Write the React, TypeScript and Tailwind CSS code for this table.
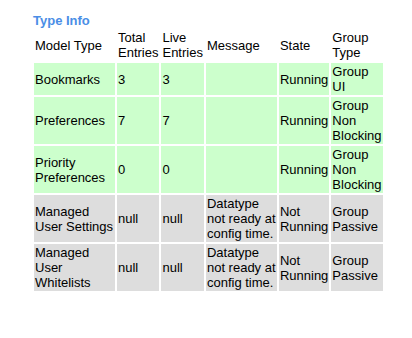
type TypeRow = {
  model: string;
  total: string;
  live: string;
  message: string;
  state: string;
  group: string;
  ok: boolean;
};

const rows: TypeRow[] = [
  { model: "Bookmarks", total: "3", live: "3", message: "", state: "Running", group: "Group UI", ok: true },
  { model: "Preferences", total: "7", live: "7", message: "", state: "Running", group: "Group Non Blocking", ok: true },
  { model: "Priority Preferences", total: "0", live: "0", message: "", state: "Running", group: "Group Non Blocking", ok: true },
  {
    model: "Managed User Settings",
    total: "null",
    live: "null",
    message: "Datatype not ready at config time.",
    state: "Not Running",
    group: "Group Passive",
    ok: false,
  },
  {
    model: "Managed User Whitelists",
    total: "null",
    live: "null",
    message: "Datatype not ready at config time.",
    state: "Not Running",
    group: "Group Passive",
    ok: false,
  },
];

const cell = "p-[1px] align-middle text-left font-normal";

export default function App() {
  return (
    <div className="min-h-[338px] w-[412px] bg-white pl-[33px] pt-[13px] font-['Liberation_Sans',Arial,sans-serif] text-[13px] leading-[15px] text-black">
      <h2 className="mb-[-1px] text-[13px] font-bold leading-[15px] text-[#4a8ee6]">Type Info</h2>
      <table className="-ml-[1px] border-separate border-spacing-[2px]">
        <thead>
          <tr>
            <th className={`${cell} w-[81px]`}>Model Type</th>
            <th className={`${cell} w-[42px]`}>Total Entries</th>
            <th className={`${cell} w-[42px]`}>Live Entries</th>
            <th className={`${cell} w-[71px]`}>Message</th>
            <th className={`${cell} w-[48px]`}>State</th>
            <th className={`${cell} w-[51px]`}>Group Type</th>
          </tr>
        </thead>
        <tbody>
          {rows.map((row) => {
            const bg = row.ok ? "bg-[#ccffcc]" : "bg-[#dddddd]";
            return (
              <tr key={row.model}>
                <td className={`${cell} ${bg}`}>{row.model}</td>
                <td className={`${cell} ${bg}`}>{row.total}</td>
                <td className={`${cell} ${bg}`}>{row.live}</td>
                <td className={`${cell} ${bg}`}>{row.message}</td>
                <td className={`${cell} ${bg}`}>{row.state}</td>
                <td className={`${cell} ${bg}`}>{row.group}</td>
              </tr>
            );
          })}
        </tbody>
      </table>
    </div>
  );
}
